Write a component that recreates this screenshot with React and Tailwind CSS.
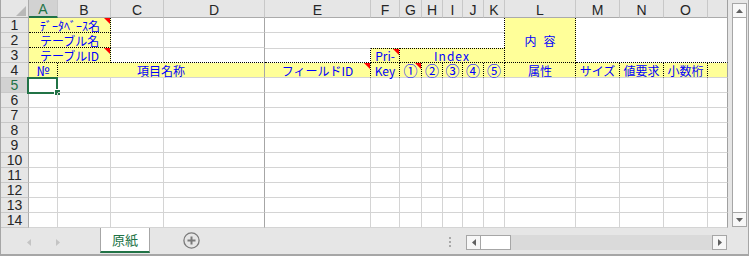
import React from 'react';
import clsx from 'clsx';

// border pieces, one literal string per style
const RIGHT = {
  grid: 'border-r border-r-[#d4d4d4]',
  dot: 'border-r border-r-black [border-right-style:dotted]',
  dark: 'border-r border-r-[#a6a6a6]',
  edge: 'border-r border-r-[#a0a0a0]',
};
const BOTTOM = {
  grid: 'border-b border-b-[#d4d4d4]',
  dot: 'border-b border-b-black [border-bottom-style:dotted]',
  none: '',
};
const TOP = {
  grid: 'border-t border-t-[#d4d4d4]',
  dot: 'border-t border-t-black [border-top-style:dotted]',
  none: '',
};

const LETTERS = ['A', 'B', 'C', 'D', 'E', 'F', 'G', 'H', 'I', 'J', 'K', 'L', 'M', 'N', 'O', ''];
const BODY_RIGHT = ['grid', 'grid', 'grid', 'dark', 'grid', 'grid', 'grid', 'grid', 'grid', 'grid', 'grid', 'grid', 'grid', 'grid', 'grid', 'edge'];
const BODY_ROWS = [5, 6, 7, 8, 9, 10, 11, 12, 13, 14];

const Note = () => (
  <span className="absolute right-0 top-0 h-[6px] w-[6px] bg-[#ff0000] [clip-path:polygon(0_0,100%_0,100%_100%)]" />
);

const Cell = ({ at, r = 'grid', b = 'grid', t = 'none', fill, note, left, children }) => (
  <div
    className={clsx(
      "relative flex items-center whitespace-nowrap font-['Noto_Sans_CJK_JP',sans-serif] text-[12px] leading-[13px] text-[#0000ff]",
      at,
      RIGHT[r],
      BOTTOM[b],
      TOP[t],
      fill && 'bg-[#ffff99]',
      left ? 'justify-start pl-[11px] pt-[1px]' : 'justify-center'
    )}
  >
    {children}
    {note && <Note />}
  </div>
);

const Circled = ({ children }) => <span className="text-[14px] leading-[13px]">{children}</span>;

const RowHead = ({ at, n, active }) => (
  <div
    className={clsx(
      'flex items-center justify-center border-r border-b border-r-[#ababab] border-b-[#c8c8c8] text-[14px] leading-none',
      at,
      active ? 'bg-[#d2d2d2] text-[#217346]' : 'bg-[#e6e6e6] text-[#262626]'
    )}
  >
    {n}
  </div>
);

const ColHead = ({ letter, index }) => {
  if (index === 0) {
    return (
      <div className="flex items-center justify-center border-r border-b-2 border-r-[#c8c8c8] border-b-[#217346] bg-[#d2d2d2] pt-[2px] text-[14px] leading-none text-[#217346]">
        {letter}
      </div>
    );
  }
  return (
    <div
      className={clsx(
        'flex items-center justify-center border-r border-b border-b-[#ababab] bg-[#e6e6e6] pt-[2px] text-[14px] leading-none text-[#262626]',
        index === 15 ? 'border-r-[#a0a0a0]' : 'border-r-[#c8c8c8]'
      )}
    >
      {letter}
    </div>
  );
};

const Arrow = ({ dir, color }) => {
  const pts = {
    up: '0,4 3.5,0 7,4',
    down: '0,0 7,0 3.5,4',
    left: '4,0 4,7 0,3.5',
    right: '0,0 0,7 4,3.5',
  }[dir];
  const vertical = dir === 'up' || dir === 'down';
  return (
    <svg width={vertical ? 7 : 4} height={vertical ? 4 : 7}>
      <polygon points={pts} fill={color} />
    </svg>
  );
};

const Sheet = () => (
  <div className="grid h-[228px] w-[727px] grid-cols-[28px_29px_53px_53px_101px_106px_29px_22px_21px_20px_21px_21px_71px_44px_44px_44px_20px] grid-rows-[18px_repeat(14,15px)]">
    {/* corner */}
    <div className="flex items-end justify-end border-r border-b border-r-[#ababab] border-b-[#ababab] bg-[#e6e6e6] pb-[1px] pr-[2px]">
      <svg width="10" height="10">
        <polygon points="10,0 10,10 0,10" fill="#b8b8b8" />
      </svg>
    </div>
    {LETTERS.map((l, i) => (
      <ColHead key={i} letter={l} index={i} />
    ))}

    {/* row 1 */}
    <RowHead at="col-[1/2] row-[2/3]" n="1" />
    <Cell at="col-[2/4] row-[2/3]" r="dot" b="dot" fill note left>ﾃﾞｰﾀﾍﾞｰｽ名</Cell>
    <Cell at="col-[4/5] row-[2/3]" />
    <Cell at="col-[5/6] row-[2/3]" r="dark" />
    <Cell at="col-[6/13] row-[2/3]" r="dot" />
    <Cell at="col-[13/14] row-[2/5]" r="dot" b="dot" fill>
      <span className="flex gap-[7px]">
        <span>内</span>
        <span>容</span>
      </span>
    </Cell>
    <Cell at="col-[14/18] row-[2/5]" r="edge" b="dot" />

    {/* row 2 */}
    <RowHead at="col-[1/2] row-[3/4]" n="2" />
    <Cell at="col-[2/4] row-[3/4]" r="dot" b="dot" fill left>テーブル名</Cell>
    <Cell at="col-[4/5] row-[3/4]" />
    <Cell at="col-[5/6] row-[3/4]" r="dark" />
    <Cell at="col-[6/13] row-[3/4]" r="dot" b="none" />

    {/* row 3 */}
    <RowHead at="col-[1/2] row-[4/5]" n="3" />
    <Cell at="col-[2/4] row-[4/5]" r="dot" b="dot" fill note left>テーブルID</Cell>
    <Cell at="col-[4/5] row-[4/5]" b="dot" />
    <Cell at="col-[5/6] row-[4/5]" r="dark" b="dot" />
    <Cell at="col-[6/7] row-[4/5]" r="dot" b="dot" t="grid" />
    <Cell at="col-[7/8] row-[4/5]" r="dot" b="dot" t="dot" fill note>Pri-</Cell>
    <Cell at="col-[8/13] row-[4/5]" r="dot" b="dot" t="dot" fill>
      <span className="tracking-[1px]">Index</span>
    </Cell>

    {/* row 4 */}
    <RowHead at="col-[1/2] row-[5/6]" n="4" />
    <Cell at="col-[2/3] row-[5/6]" r="dot" fill>
      <span className="text-[13px]">№</span>
    </Cell>
    <Cell at="col-[3/6] row-[5/6]" r="dark" fill>項目名称</Cell>
    <Cell at="col-[6/7] row-[5/6]" r="dot" fill note>フィールドID</Cell>
    <Cell at="col-[7/8] row-[5/6]" r="dot" fill>Key</Cell>
    <Cell at="col-[8/9] row-[5/6]" r="dot" fill note><Circled>①</Circled></Cell>
    <Cell at="col-[9/10] row-[5/6]" r="dot" fill><Circled>②</Circled></Cell>
    <Cell at="col-[10/11] row-[5/6]" r="dot" fill><Circled>③</Circled></Cell>
    <Cell at="col-[11/12] row-[5/6]" r="dot" fill><Circled>④</Circled></Cell>
    <Cell at="col-[12/13] row-[5/6]" r="dot" fill><Circled>⑤</Circled></Cell>
    <Cell at="col-[13/14] row-[5/6]" r="dot" fill>属性</Cell>
    <Cell at="col-[14/15] row-[5/6]" r="dot" fill>サイズ</Cell>
    <Cell at="col-[15/16] row-[5/6]" r="dot" fill>値要求</Cell>
    <Cell at="col-[16/17] row-[5/6]" r="dot" fill>小数桁</Cell>
    <Cell at="col-[17/18] row-[5/6]" r="edge" fill />

    {/* empty rows */}
    {BODY_ROWS.map((n) => (
      <React.Fragment key={n}>
        <RowHead n={String(n)} active={n === 5} />
        {BODY_RIGHT.map((r, i) => (
          <Cell key={i} r={r}>
            {n === 5 && i === 0 && (
              <>
                <span className="absolute left-[-2px] top-[-1px] h-[17px] w-[31px] border-2 border-[#217346]" />
                <span className="absolute left-[25px] top-[11px] h-[7px] w-[7px] border border-white bg-[#217346]" />
              </>
            )}
          </Cell>
        ))}
      </React.Fragment>
    ))}
  </div>
);

const VScroll = () => (
  <div className="flex w-[20px] flex-col bg-[#e6e6e6] pb-[1px] pl-[4px] pt-[3px]">
    <div className="flex h-[15px] w-[15px] items-center justify-center border border-[#a6a6a6] bg-[#f7f7f7]">
      <Arrow dir="up" color="#606060" />
    </div>
    <div className="w-[15px] flex-1 border-x border-[#a6a6a6] bg-white" />
    <div className="flex h-[15px] w-[15px] items-center justify-center border border-[#a6a6a6] bg-[#f7f7f7]">
      <Arrow dir="down" color="#606060" />
    </div>
  </div>
);

const TabBar = () => (
  <div className="flex h-[28px] items-start border-b-2 border-[#a6a6a6] bg-[#e6e6e6]">
    <div className="mt-[11px] flex w-[99px] items-start gap-[25px] pl-[26px]">
      <Arrow dir="left" color="#c4c4c4" />
      <Arrow dir="right" color="#c4c4c4" />
    </div>
    <div className="flex h-[25px] w-[50px] items-center justify-center border-x border-b-2 border-x-[#a6a6a6] border-b-[#217346] bg-white font-['Noto_Sans_CJK_JP',sans-serif] text-[13px] leading-none text-[#217346]">
      原紙
    </div>
    <div className="ml-[33px] mt-[4px]">
      <svg width="17" height="17" viewBox="0 0 17 17">
        <circle cx="8.5" cy="8.5" r="7.6" fill="none" stroke="#7a7a7a" strokeWidth="1.3" />
        <path d="M8.5 4.5v8M4.5 8.5h8" stroke="#7a7a7a" strokeWidth="2" />
      </svg>
    </div>
    <div className="ml-[249px] mt-[9px] flex flex-col gap-[2px]">
      <span className="h-[2px] w-[2px] bg-[#a8a8a8]" />
      <span className="h-[2px] w-[2px] bg-[#a8a8a8]" />
      <span className="h-[2px] w-[2px] bg-[#a8a8a8]" />
    </div>
    <div className="ml-[15px] mt-[7px] flex h-[15px]">
      <div className="flex w-[15px] items-center justify-center border border-[#a6a6a6] bg-[#f7f7f7]">
        <Arrow dir="left" color="#606060" />
      </div>
      <div className="w-[30px] border-y border-r border-[#a6a6a6] bg-white" />
      <div className="w-[201px] bg-[#dadada]" />
      <div className="flex w-[15px] items-center justify-center border border-[#a6a6a6] bg-[#f7f7f7]">
        <Arrow dir="right" color="#606060" />
      </div>
    </div>
  </div>
);

export default function App() {
  return (
    <div className="h-[256px] w-[749px] overflow-hidden border-x border-[#a6a6a6] bg-white font-['Liberation_Sans',sans-serif]">
      <div className="flex">
        <Sheet />
        <VScroll />
      </div>
      <TabBar />
    </div>
  );
}
